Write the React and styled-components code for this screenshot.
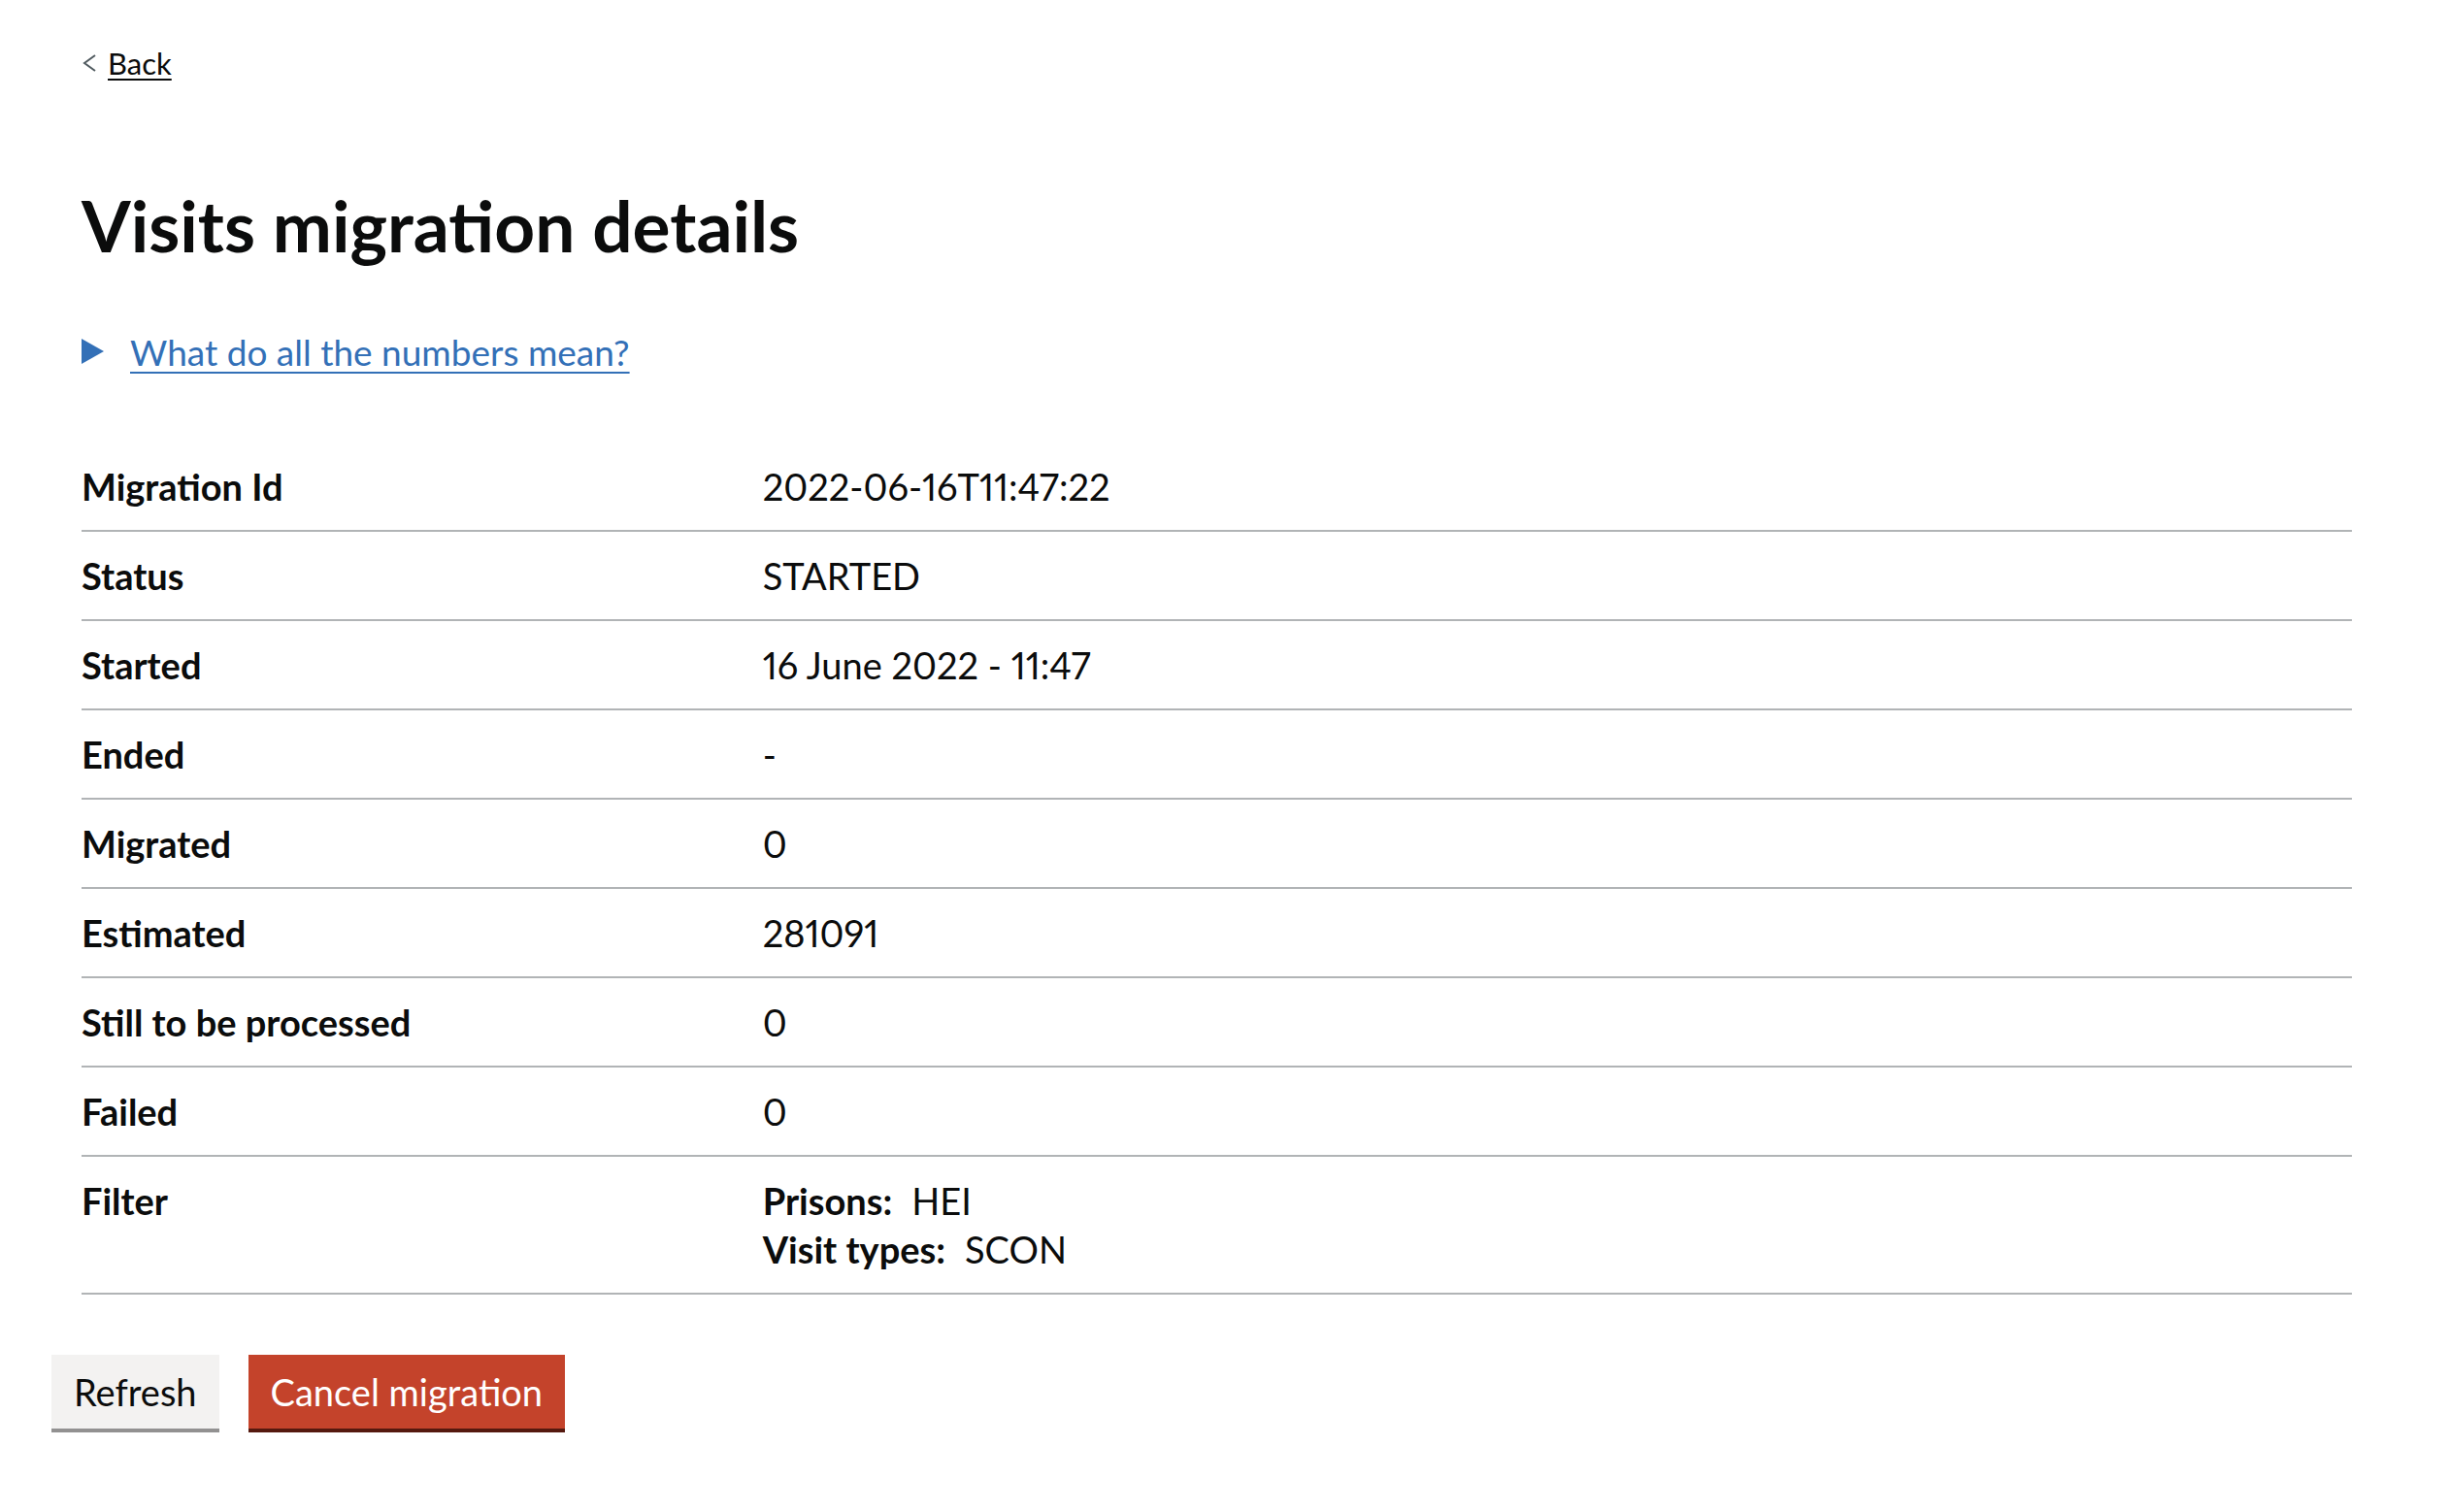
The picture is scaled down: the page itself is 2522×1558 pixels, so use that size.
import React from 'react';
import styled, { createGlobalStyle } from 'styled-components';

const GlobalStyle = createGlobalStyle`
  body {
    margin: 0;
    background: #ffffff;
    color: #0b0c0c;
    font-family: Lato, "Liberation Sans", sans-serif;
    font-variant-numeric: proportional-nums;
  }
`;

const Page = styled.div`
  padding: 45px 99px 80px 84px;
`;

const BackLink = styled.a`
  display: inline-flex;
  align-items: center;
  gap: 11px;
  height: 40px;
  font-size: 31px;
  color: #0b0c0c;
  text-decoration: underline;
  text-decoration-thickness: 2px;
  text-underline-offset: 4px;
`;

const Heading = styled.h1`
  margin: 97px 0 0 0;
  font-size: 73px;
  line-height: 100px;
  font-weight: 700;
`;

const Details = styled.div`
  display: flex;
  align-items: center;
  gap: 27px;
  margin-top: 55px;
  height: 50px;
`;

const DetailsLink = styled.a`
  font-size: 37px;
  color: #3370b7;
  text-decoration: underline;
  text-decoration-thickness: 2px;
  text-underline-offset: 6px;
`;

const SummaryList = styled.dl`
  margin: 69px 0 0 0;
`;

const Row = styled.div`
  display: grid;
  grid-template-columns: 30% 1fr;
  border-bottom: 2px solid #b1b4b6;
`;

const Key = styled.dt`
  padding: 20px 20px 20px 0;
  font-size: 38px;
  line-height: 50px;
  font-weight: 700;
`;

const Value = styled.dd`
  margin: 0;
  padding: 20px 0;
  font-size: 38px;
  line-height: 50px;
`;

const Label = styled.span`
  font-weight: 700;
  margin-right: 20px;
`;

const ButtonRow = styled.div`
  display: flex;
  gap: 30px;
  margin: 62px 0 0 -31px;
`;

const Button = styled.button`
  font-family: inherit;
  font-size: 38px;
  line-height: 76px;
  height: 80px;
  padding: 0 23px 4px;
  border: none;
  cursor: pointer;
  color: ${({ $warning }) => ($warning ? '#ffffff' : '#0b0c0c')};
  background: ${({ $warning }) => ($warning ? '#c4432b' : '#f3f2f1')};
  box-shadow: inset 0 -4px 0 ${({ $warning }) => ($warning ? '#55190f' : '#929191')};
`;

const rows = [
  ['Migration Id', '2022-06-16T11:47:22'],
  ['Status', 'STARTED'],
  ['Started', '16 June 2022 - 11:47'],
  ['Ended', '-'],
  ['Migrated', '0'],
  ['Estimated', '281091'],
  ['Still to be processed', '0'],
  ['Failed', '0'],
];

const App = () => {
  return (
    <>
      <GlobalStyle />
      <Page>
        <BackLink href="#">
          <svg width="16" height="20" viewBox="0 0 16 20">
            <polyline points="14,2 3,10 14,18" fill="none" stroke="#505a5f" strokeWidth="2" />
          </svg>
          Back
        </BackLink>
        <Heading>Visits migration details</Heading>
        <Details>
          <svg width="23" height="26" viewBox="0 0 23 26">
            <polygon points="0,0 23,13 0,26" fill="#3370b7" />
          </svg>
          <DetailsLink href="#">What do all the numbers mean?</DetailsLink>
        </Details>
        <SummaryList>
          {rows.map(([k, v]) => (
            <Row key={k}>
              <Key>{k}</Key>
              <Value>{v}</Value>
            </Row>
          ))}
          <Row>
            <Key>Filter</Key>
            <Value>
              <div><Label>Prisons:</Label>HEI</div>
              <div><Label>Visit types:</Label>SCON</div>
            </Value>
          </Row>
        </SummaryList>
        <ButtonRow>
          <Button>Refresh</Button>
          <Button $warning>Cancel migration</Button>
        </ButtonRow>
      </Page>
    </>
  );
};

export default App;
